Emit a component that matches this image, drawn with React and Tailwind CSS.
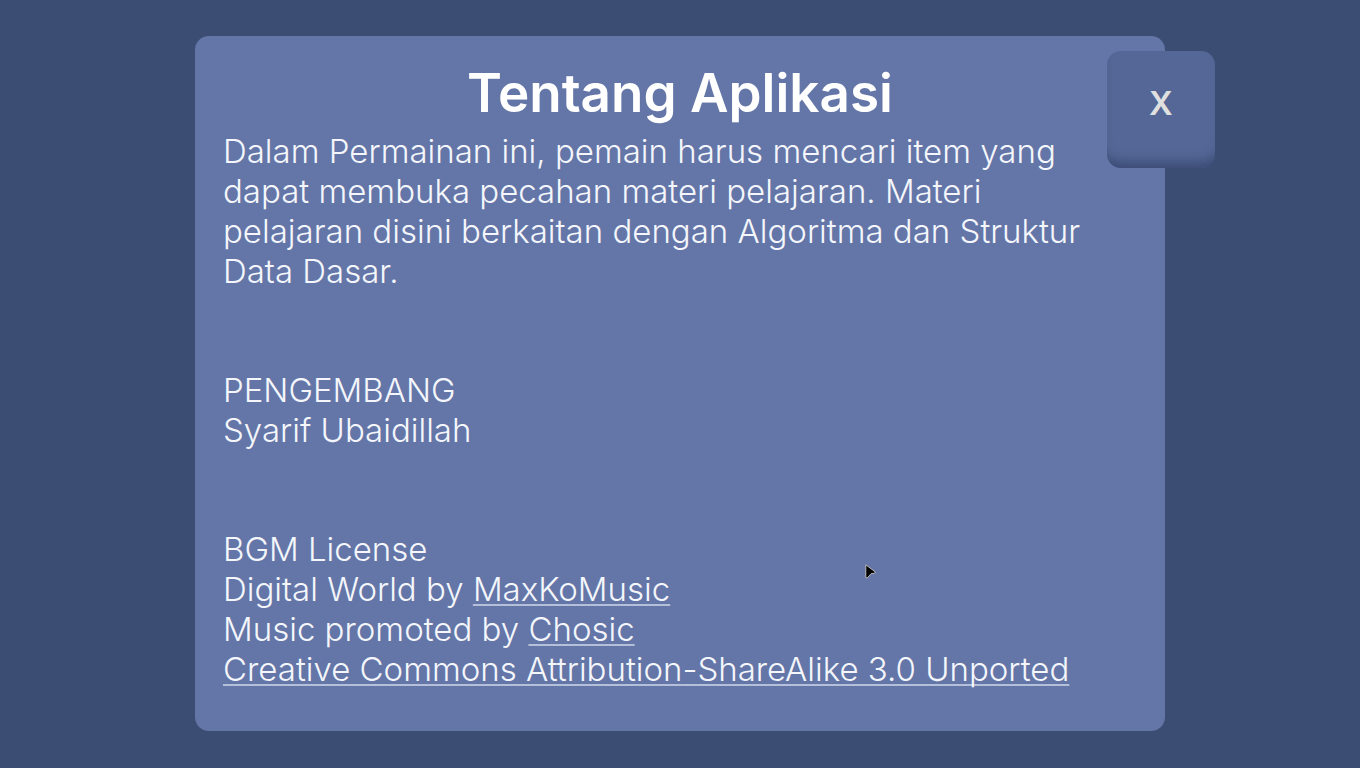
function TextLink({ href, children }) {
  return (
    <a
      href={href}
      className="underline decoration-[#b4bfda] decoration-2 underline-offset-[3px] [text-decoration-skip-ink:none]"
    >
      {children}
    </a>
  );
}

function Pointer() {
  return (
    <svg
      aria-hidden="true"
      viewBox="0 0 12 16"
      className="pointer-events-none absolute left-[670px] top-[528px] h-4 w-3"
    >
      <path d="M0.8 0.8 L10.4 8 L9.6 9.2 L6.2 9.6 L2.2 14 L0.8 13.6 Z" fill="#000" stroke="#c9c5c0" strokeWidth="0.9" />
    </svg>
  );
}

export default function App() {
  return (
    <main className="min-h-screen bg-[#3c4d74] px-[60px] py-9 font-[Inter,'Noto_Sans',sans-serif]">
      <section
        aria-labelledby="about-title"
        className="relative mx-auto w-full max-w-[970px] rounded-[14px] bg-[#6476a8] px-7 pb-[42px] pt-[25px] text-[#f4f6fb]"
      >
        <h1 id="about-title" className="text-center text-[53px] font-semibold leading-[64px] text-white">
          Tentang Aplikasi
        </h1>
        <div className="flex flex-col gap-[79px] pt-1.5 text-[33px] font-light leading-10">
          <p>
            Dalam Permainan ini, pemain harus mencari item yang
            <br />
            dapat membuka pecahan materi pelajaran. Materi
            <br />
            pelajaran disini berkaitan dengan Algoritma dan Struktur
            <br />
            Data Dasar.
          </p>
          <p>
            PENGEMBANG
            <br />
            Syarif Ubaidillah
          </p>
          <p>
            BGM License
            <br />
            Digital World by <TextLink href="#maxkomusic">MaxKoMusic</TextLink>
            <br />
            Music promoted by <TextLink href="#chosic">Chosic</TextLink>
            <br />
            <TextLink href="#license">Creative Commons Attribution-ShareAlike 3.0 Unported</TextLink>
          </p>
        </div>
        <button
          type="button"
          className="absolute -right-[50px] top-[15px] flex h-[117px] w-[108px] items-center justify-center rounded-[14px] bg-[#546796] pb-3 text-[33px] font-semibold text-[#e0e0e0] shadow-[inset_0_-14px_12px_-8px_#3c4b75]"
        >
          X
        </button>
        <Pointer />
      </section>
    </main>
  );
}
